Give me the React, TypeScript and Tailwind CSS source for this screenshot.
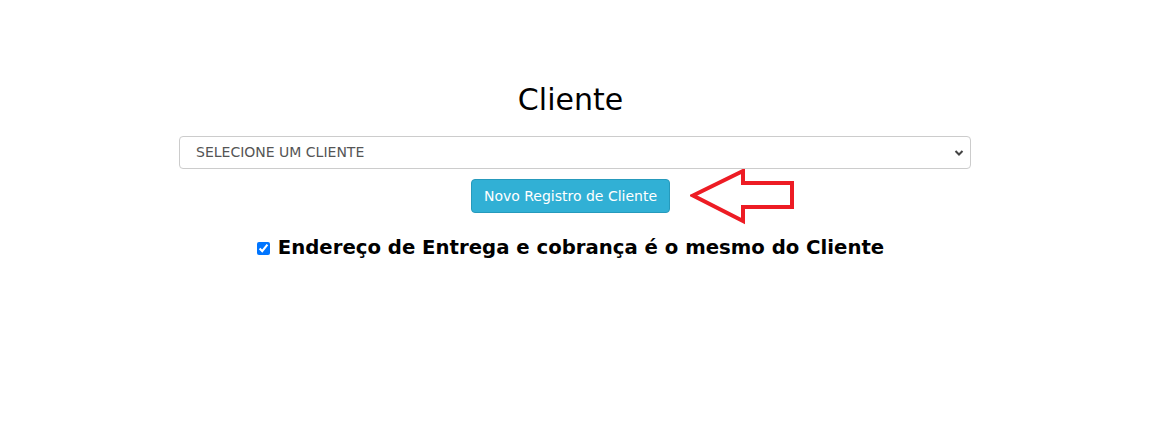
import React from "react";

export default function App() {
  return (
    <div className="w-[1151px] h-[448px] bg-white" style={{ fontFamily: '"DejaVu Sans", Verdana, sans-serif' }}>
      <div className="flex flex-col items-center pt-[80px]">
        <h1 className="text-[30px] leading-[40px] text-black font-normal ml-[-10px]">Cliente</h1>
        <div className="relative mt-[16px] w-[792px] h-[33px] ml-[-1px] border border-[#cccccc] rounded-[4px] bg-white flex items-center px-[16px]">
          <span className="text-[14px] text-[#555555] uppercase">SELECIONE UM CLIENTE</span>
          <svg className="absolute right-[6px] top-[12px]" width="10" height="8" viewBox="0 0 10 8">
            <path d="M1.5 2 L5 5.5 L8.5 2" fill="none" stroke="#444" strokeWidth="2" />
          </svg>
        </div>
        <div className="relative mt-[10px] ml-[-10px]">
          <button className="w-[199px] h-[34px] rounded-[4px] bg-[#31b0d5] border border-[#269abc] text-white text-[14px] leading-[20px]">
            Novo Registro de Cliente
          </button>
          <svg className="absolute left-[219px] top-[-10px]" width="106" height="56" viewBox="0 0 106 56">
            <polygon points="3,26.5 53,2 53,14 102,14 102,38 53,38 53,52" fill="none" stroke="#ed1c24" strokeWidth="4" strokeLinejoin="miter" />
          </svg>
        </div>
        <label className="mt-[21px] ml-[-10px] flex items-center gap-[8px]">
          <input type="checkbox" defaultChecked className="w-[13px] h-[13px] m-0 accent-[#0075ff]" />
          <span className="text-[19.7px] font-bold text-black leading-[28px]">Endereço de Entrega e cobrança é o mesmo do Cliente</span>
        </label>
      </div>
    </div>
  );
}
